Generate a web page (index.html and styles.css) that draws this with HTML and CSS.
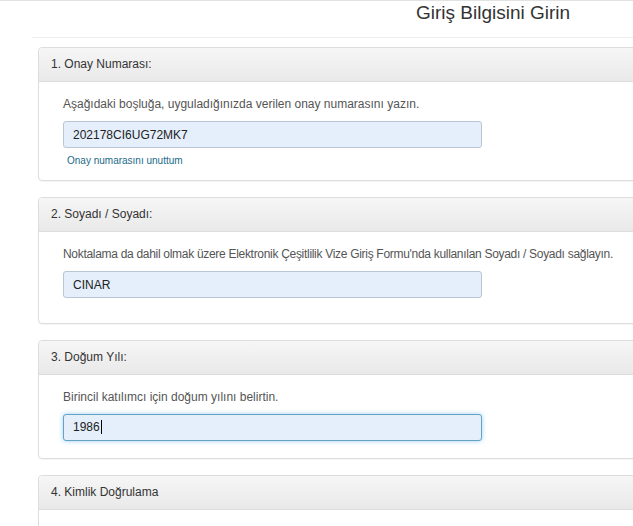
FILE: index.html
```html
<!DOCTYPE html>
<html lang="tr">
<head>
    <meta charset="UTF-8">
    <meta name="viewport" content="width=device-width, initial-scale=1.0">
    <title>Giriş Bilgisini Girin</title>
    <link rel="stylesheet" href="styles.css">
</head>
<body>

    <div id="page">
        <h1 class="page-title">Giriş Bilgisini Girin</h1>
        <hr class="divider">

        <div class="panel panel-first">
            <div class="panel-heading">1. Onay Numarası:</div>
            <div class="panel-body">
                <p class="hint">Aşağıdaki boşluğa, uyguladığınızda verilen onay numarasını yazın.</p>
                <input type="text" class="field" value="202178CI6UG72MK7">
                <a href="#" class="forgot">Onay numarasını unuttum</a>
            </div>
        </div>

        <div class="panel panel-second">
            <div class="panel-heading">2. Soyadı / Soyadı:</div>
            <div class="panel-body">
                <p class="hint hint-long">Noktalama da dahil olmak üzere Elektronik Çeşitlilik Vize Giriş Formu'nda kullanılan Soyadı / Soyadı sağlayın.</p>
                <input type="text" class="field" value="CINAR">
            </div>
        </div>

        <div class="panel panel-third">
            <div class="panel-heading">3. Doğum Yılı:</div>
            <div class="panel-body">
                <p class="hint">Birincil katılımcı için doğum yılını belirtin.</p>
                <div class="field field-focus">1986<span class="caret"></span></div>
            </div>
        </div>

        <div class="panel panel-last">
            <div class="panel-heading">4. Kimlik Doğrulama</div>
            <div class="panel-body"></div>
        </div>
    </div>

</body>
</html>
```

FILE: styles.css
```css
body {
    font-family: "Liberation Sans", Arial, sans-serif;
    margin: 0;
    padding: 0;
    background-color: #fff;
    color: #333;
    border-top: 1px solid #e2e2e2;
    overflow: hidden;
    height: 525px;
}
#page {
    margin-left: 32px;
    width: 640px;
}
.page-title {
    margin: 0;
    padding-left: 384px;
    font-size: 19px;
    font-weight: normal;
    line-height: 24px;
    color: #333;
}
.divider {
    margin: 12px 0 9px;
    border: 0;
    border-top: 1px solid #eee;
}
.panel {
    margin-left: 6px;
    border: 1px solid #ddd;
    border-radius: 4px;
    margin-bottom: 16px;
    box-shadow: 0 1px 1px rgba(0, 0, 0, 0.04);
}
.panel-heading {
    height: 33px;
    line-height: 33px;
    padding-left: 12px;
    font-size: 12px;
    color: #333;
    background: linear-gradient(#f6f6f6, #e9e9e9);
    border-bottom: 1px solid #ddd;
    border-radius: 4px 4px 0 0;
}
.panel-body {
    padding: 13px 24px 11px;
}
.panel-second .panel-body {
    padding-bottom: 25px;
}
.panel-third .panel-body {
    padding-bottom: 17px;
}
.panel-last .panel-body {
    height: 40px;
}
.hint {
    margin: 0 0 8px;
    font-size: 12px;
    line-height: 18px;
    color: #555;
    white-space: nowrap;
}
.hint-long {
    letter-spacing: -0.3px;
}
.field {
    display: block;
    box-sizing: border-box;
    width: 419px;
    height: 27px;
    padding: 0 9px;
    font-family: "Liberation Sans", Arial, sans-serif;
    font-size: 12px;
    line-height: 25px;
    color: #222;
    background-color: #e5effb;
    border: 1px solid #b9c6d3;
    border-radius: 3px;
    outline: none;
}
.field-focus {
    border-color: #62a3c4;
    box-shadow: 0 0 5px rgba(82, 168, 236, 0.55);
}
.caret {
    display: inline-block;
    width: 1px;
    height: 14px;
    margin-left: 1px;
    vertical-align: -3px;
    background-color: #000;
}
.forgot {
    display: inline-block;
    margin: 5px 0 0 4px;
    font-size: 10px;
    line-height: 16px;
    color: #1a6a87;
    text-decoration: none;
}
```
